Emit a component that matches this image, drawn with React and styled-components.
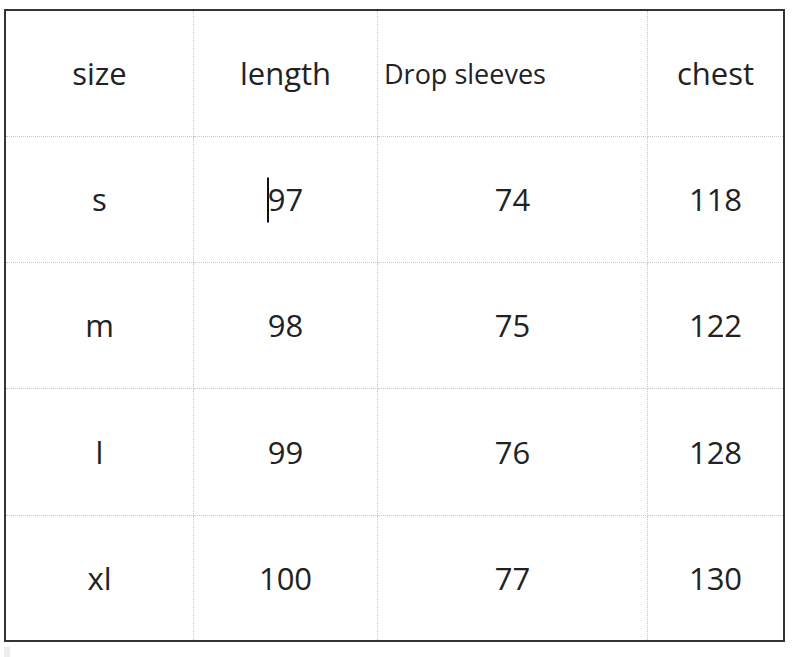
import styled, {createGlobalStyle} from "styled-components";

const GlobalStyle = createGlobalStyle`
  html, body {
    margin: 0;
    padding: 0;
    background: #fff;
  }
  body {
    font-family: "Open Sans", "Noto Sans", sans-serif;
    color: #222;
  }
`;

const Page = styled.div`
  width: 800px;
  height: 657px;
  overflow: hidden;
  padding: 9px 0 0 4px;
  box-sizing: border-box;
`;

const Grid = styled.div`
  width: 781px;
  height: 633px;
  box-sizing: border-box;
  border: 2px solid #333;
  display: grid;
  grid-template-columns: 188px 184px 270px 135px;
  grid-template-rows: 126px 126px 126px 127px 124px;
`;

const Cell = styled.div`
  display: flex;
  align-items: center;
  justify-content: ${(p) => (p.$left ? "flex-start" : "center")};
  padding-left: ${(p) => (p.$left ? "6px" : "0")};
  box-sizing: border-box;
  border-right: ${(p) => (p.$lastCol ? "none" : "1px dotted #c9c9c9")};
  border-bottom: ${(p) => (p.$lastRow ? "none" : "1px dotted #c9c9c9")};
  font-size: ${(p) => (p.$small ? "27px" : "31px")};
  line-height: 1;
  white-space: nowrap;
`;

const Value = styled.span`
  position: relative;
  display: inline-block;
`;

const Caret = styled.span`
  position: absolute;
  left: -1px;
  top: 50%;
  width: 2px;
  height: 45px;
  transform: translateY(-50%);
  background: #111;
`;

const Stub = styled.div`
  margin-top: 5px;
  width: 6px;
  height: 12px;
  background: #ededed;
`;

const rows = [
    ["size", "length", "Drop sleeves", "chest"],
    ["s", "97", "74", "118"],
    ["m", "98", "75", "122"],
    ["l", "99", "76", "128"],
    ["xl", "100", "77", "130"],
];

const App = () => {
    return (
        <Page>
            <GlobalStyle/>
            <Grid>
                {rows.map((row, r) =>
                    row.map((text, c) => {
                        const isDrop = r === 0 && c === 2;
                        return (
                            <Cell
                                key={r + "-" + c}
                                $left={isDrop}
                                $small={isDrop}
                                $lastCol={c === row.length - 1}
                                $lastRow={r === rows.length - 1}
                            >
                                <Value>
                                    {text}
                                    {r === 1 && c === 1 && <Caret/>}
                                </Value>
                            </Cell>
                        );
                    })
                )}
            </Grid>
            <Stub/>
        </Page>
    );
};

export default App;
